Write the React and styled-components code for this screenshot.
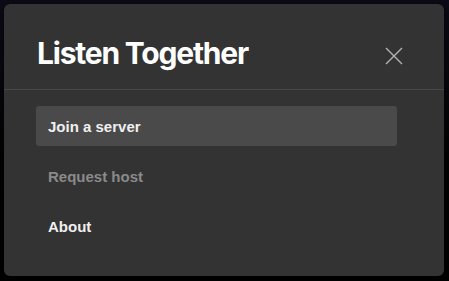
import React from 'react';
import styled, { createGlobalStyle } from 'styled-components';

const GlobalStyle = createGlobalStyle`
  html, body {
    margin: 0;
    padding: 0;
    height: 100%;
  }
  body {
    background: linear-gradient(180deg, #0c0b17 0%, #07070c 30%, #020203 60%, #000 100%);
    overflow: hidden;
  }
`;

const Page = styled.div`
  width: 449px;
  height: 281px;
  padding: 4px 5px 5px 4px;
  box-sizing: border-box;
`;

const Modal = styled.div`
  height: 100%;
  background: #333333;
  border-radius: 6px;
  display: flex;
  flex-direction: column;
  box-shadow: 0 2px 8px rgba(0, 0, 0, 0.5);
`;

const Header = styled.header`
  height: 86px;
  display: flex;
  align-items: center;
  justify-content: space-between;
  padding: 13px 40px 0 33px;
  box-sizing: border-box;
  border-bottom: 1px solid #484848;
`;

const Title = styled.h1`
  margin: 0;
  font-family: Inter, "Noto Sans", sans-serif;
  font-size: 30px;
  font-weight: 700;
  letter-spacing: -1.2px;
  color: #ffffff;
`;

const CloseButton = styled.button`
  width: 20px;
  height: 20px;
  margin-top: 6px;
  padding: 0;
  border: none;
  background: none;
  display: flex;
  align-items: center;
  justify-content: center;
  cursor: pointer;
`;

const Menu = styled.nav`
  display: flex;
  flex-direction: column;
  gap: 10px;
  padding: 16px 47px 0 32px;
`;

const MenuItem = styled.div`
  height: 40px;
  display: flex;
  align-items: center;
  padding: 0 12px;
  border-radius: 3px;
  background: ${p => (p.active ? '#4a4a4a' : 'transparent')};
  color: ${p => (p.disabled ? '#8a8a8a' : '#f0f0f0')};
  font-family: "Liberation Sans", Arial, sans-serif;
  font-size: 15px;
  font-weight: 700;
`;

function CloseIcon() {
  return (
    <svg width="18" height="18" viewBox="0 0 18 18">
      <path d="M1 1 L17 17 M17 1 L1 17" stroke="#b3b3b3" strokeWidth="1.4" fill="none" />
    </svg>
  );
}

export default function App() {
  return (
    <>
      <GlobalStyle />
      <Page>
        <Modal>
          <Header>
            <Title>Listen Together</Title>
            <CloseButton aria-label="Close">
              <CloseIcon />
            </CloseButton>
          </Header>
          <Menu>
            <MenuItem active>Join a server</MenuItem>
            <MenuItem disabled>Request host</MenuItem>
            <MenuItem>About</MenuItem>
          </Menu>
        </Modal>
      </Page>
    </>
  );
}
